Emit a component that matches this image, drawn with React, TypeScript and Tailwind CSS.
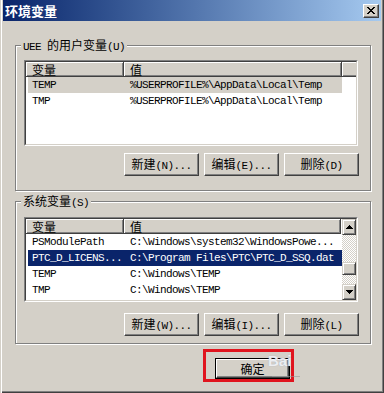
import React from "react";

const C = ({ children, cls = "" }: { children: React.ReactNode; cls?: string }) => (
  <span className={"font-['Noto_Sans_CJK_SC',sans-serif] text-[12px] leading-[13px] " + cls}>{children}</span>
);
const L = ({ children }: { children: React.ReactNode }) => (
  <span className="font-['Liberation_Mono',monospace] text-[11px] tracking-[-0.6px] leading-[13px]">{children}</span>
);

const raised =
  "bg-[#d4d0c8] border border-t-white border-l-white border-r-[#404040] border-b-[#404040] shadow-[inset_-1px_-1px_#808080]";

function Btn({ children }: { children: React.ReactNode }) {
  return (
    <div className={"w-[75px] h-[23px] flex items-center justify-center text-black " + raised}>
      <span className="inline-flex items-baseline whitespace-nowrap">{children}</span>
    </div>
  );
}

function Arrow({ up }: { up?: boolean }) {
  return (
    <div className="h-[16px] flex items-center justify-center bg-[#d4d0c8] border border-t-[#d4d0c8] border-l-[#d4d0c8] border-r-[#404040] border-b-[#404040] shadow-[inset_1px_1px_#fff,inset_-1px_-1px_#808080]">
      <svg width="7" height="4" viewBox="0 0 7 4" shapeRendering="crispEdges">
        {up ? (
          <path d="M3 0h1v1h1v1h1v1h1v1H0V3h1V2h1V1h1z" fill="#000" />
        ) : (
          <path d="M0 0h7v1H6v1H5v1H4v1H3V3H2V2H1V1H0z" fill="#000" />
        )}
      </svg>
    </div>
  );
}

type Row = { name: string; value: string; sel?: "active" | "inactive" };

function ListView({ hClass, rows, scroll }: { hClass: string; rows: Row[]; scroll?: boolean }) {
  return (
    <div className={"w-[334px] border border-t-[#808080] border-l-[#808080] border-r-white border-b-white " + hClass}>
      <div className="h-full flex bg-white border border-t-[#404040] border-l-[#404040] border-r-[#d4d0c8] border-b-[#d4d0c8]">
        <div className="flex-1 flex flex-col">
          <div className="h-[15px] flex shrink-0">
            <div className="w-[98px] h-[15px] flex items-center pl-[6px] bg-[#d4d0c8] border-r border-b border-r-[#404040] border-b-[#404040] shadow-[inset_1px_1px_#fff,inset_-1px_-1px_#808080]">
              <C>变量</C>
            </div>
            <div className={(scroll ? "w-[217px]" : "w-[218px]") + " h-[15px] flex items-center pl-[6px] bg-[#d4d0c8] border-r border-b border-r-[#404040] border-b-[#404040] shadow-[inset_1px_1px_#fff,inset_-1px_-1px_#808080]"}>
              <C>值</C>
            </div>
            {!scroll && (
              <div className="flex-1 h-[15px] bg-[#d4d0c8] border-b border-b-[#404040] shadow-[inset_1px_1px_#fff,inset_0_-1px_#808080]" />
            )}
          </div>
          {rows.map((r, i) => (
            <div
              key={i}
              className={
                "ml-[2px] w-[314px] h-[16px] flex items-center whitespace-nowrap overflow-hidden font-['Liberation_Mono',monospace] text-[11px] tracking-[-0.6px] " +
                (r.sel === "active"
                  ? "bg-[#0a246a] text-white"
                  : r.sel === "inactive"
                  ? "bg-[#d4d0c8] text-black"
                  : "text-black")
              }
            >
              <div className="w-[96px] shrink-0 pl-[4px] overflow-hidden">{r.name}</div>
              <div className="pl-[6px]">{r.value}</div>
            </div>
          ))}
        </div>
        {scroll && (
          <div className="w-[15px] flex flex-col">
            <Arrow up />
            <div className="h-[27px] bg-[repeating-conic-gradient(#d4d0c8_0%_25%,#ffffff_0%_50%)] bg-[length:2px_2px]" />
            <div className="h-[13px] bg-[#d4d0c8] border border-t-[#d4d0c8] border-l-[#d4d0c8] border-r-[#404040] border-b-[#404040] shadow-[inset_1px_1px_#fff,inset_-1px_-1px_#808080]" />
            <div className="flex-1 bg-[repeating-conic-gradient(#d4d0c8_0%_25%,#ffffff_0%_50%)] bg-[length:2px_2px]" />
            <Arrow />
          </div>
        )}
      </div>
    </div>
  );
}

export default function App() {
  const userRows: Row[] = [
    { name: "TEMP", value: "%USERPROFILE%\\AppData\\Local\\Temp", sel: "inactive" },
    { name: "TMP", value: "%USERPROFILE%\\AppData\\Local\\Temp" },
  ];
  const sysRows: Row[] = [
    { name: "PSModulePath", value: "C:\\Windows\\system32\\WindowsPowe..." },
    { name: "PTC_D_LICENS...", value: "C:\\Program Files\\PTC\\PTC_D_SSQ.dat", sel: "active" },
    { name: "TEMP", value: "C:\\Windows\\TEMP" },
    { name: "TMP", value: "C:\\Windows\\TEMP" },
  ];

  return (
    <div className="w-[384px] h-[393px] bg-[#d4d0c8] flex flex-col px-[3px] overflow-hidden text-black shadow-[inset_1px_0_#d4d0c8,inset_2px_0_#fff,inset_-1px_-1px_#404040,inset_-2px_-2px_#808080]">
      {/* Title bar */}
      <div className="h-[21px] shrink-0 flex items-center justify-between pl-[2px] pr-[2px] bg-linear-to-r from-[#0a246a] to-[#a6caf0]">
        <span className="text-white font-bold text-[13px] leading-none font-['Noto_Sans_CJK_SC',sans-serif]">
          环境变量
        </span>
        <div className={"w-[16px] h-[14px] flex items-center justify-center " + raised}>
          <svg width="8" height="7" viewBox="0 0 8 7" shapeRendering="crispEdges">
            <path
              d="M0 0h2v1h1v1h2V1h1V0h2v1H7v1H6v1H5v1h1v1h1v1h1v1H6V6H5V5H3v1H2v1H0V6h1V5h1V4h1V3H2V2H1V1H0z"
              fill="#000"
            />
          </svg>
        </div>
      </div>

      {/* User variables group */}
      <div className="relative shrink-0 mt-[24px] ml-[12px] w-[356px] h-[146px] border border-[#808080] shadow-[inset_1px_1px_#fff,1px_1px_#fff] pt-[14px] pl-[8px]">
        <div className="absolute -top-[8px] left-[5px] px-[2px] bg-[#d4d0c8] flex items-baseline whitespace-nowrap">
          <L>UEE</L>
          <C cls="ml-[6px]">的用户变量</C>
          <L>(U)</L>
        </div>
        <ListView hClass="h-[86px]" rows={userRows} />
        <div className="flex gap-[5px] mt-[7px] ml-[100px]">
          <Btn>
            <C>新建</C>
            <L>(N)...</L>
          </Btn>
          <Btn>
            <C>编辑</C>
            <L>(E)...</L>
          </Btn>
          <Btn>
            <C>删除</C>
            <L>(D)</L>
          </Btn>
        </div>
      </div>

      {/* System variables group */}
      <div className="relative shrink-0 mt-[10px] ml-[12px] w-[356px] h-[143px] border border-[#808080] shadow-[inset_1px_1px_#fff,1px_1px_#fff] pt-[15px] pl-[8px]">
        <div className="absolute -top-[8px] left-[5px] px-[2px] bg-[#d4d0c8] flex items-baseline whitespace-nowrap">
          <C>系统变量</C>
          <L>(S)</L>
        </div>
        <ListView hClass="h-[85px]" rows={sysRows} scroll />
        <div className="flex gap-[5px] mt-[11px] ml-[100px]">
          <Btn>
            <C>新建</C>
            <L>(W)...</L>
          </Btn>
          <Btn>
            <C>编辑</C>
            <L>(I)...</L>
          </Btn>
          <Btn>
            <C>删除</C>
            <L>(L)</L>
          </Btn>
        </div>
      </div>

      {/* OK button with red highlight */}
      <div className="relative shrink-0 mt-[5px] ml-[200px] w-[91px] h-[33px] border-[3px] border-[#e0141e] pl-[9px] pt-[6px]">
        <div className="w-[75px] h-[21px] border border-black">
          <div className={"w-full h-full flex items-center justify-center " + raised}>
            <C>确定</C>
          </div>
        </div>
        <div className="absolute left-[62px] top-[1px] text-[15px] leading-none font-bold font-['Liberation_Sans',sans-serif] text-white/80 [text-shadow:0_0_1px_#9aa4b8]">
          Bai
        </div>
        <div className="absolute left-[66px] top-[24px] w-[28px] h-[1px] bg-[#9a9a9a]/60" />
      </div>
    </div>
  );
}
